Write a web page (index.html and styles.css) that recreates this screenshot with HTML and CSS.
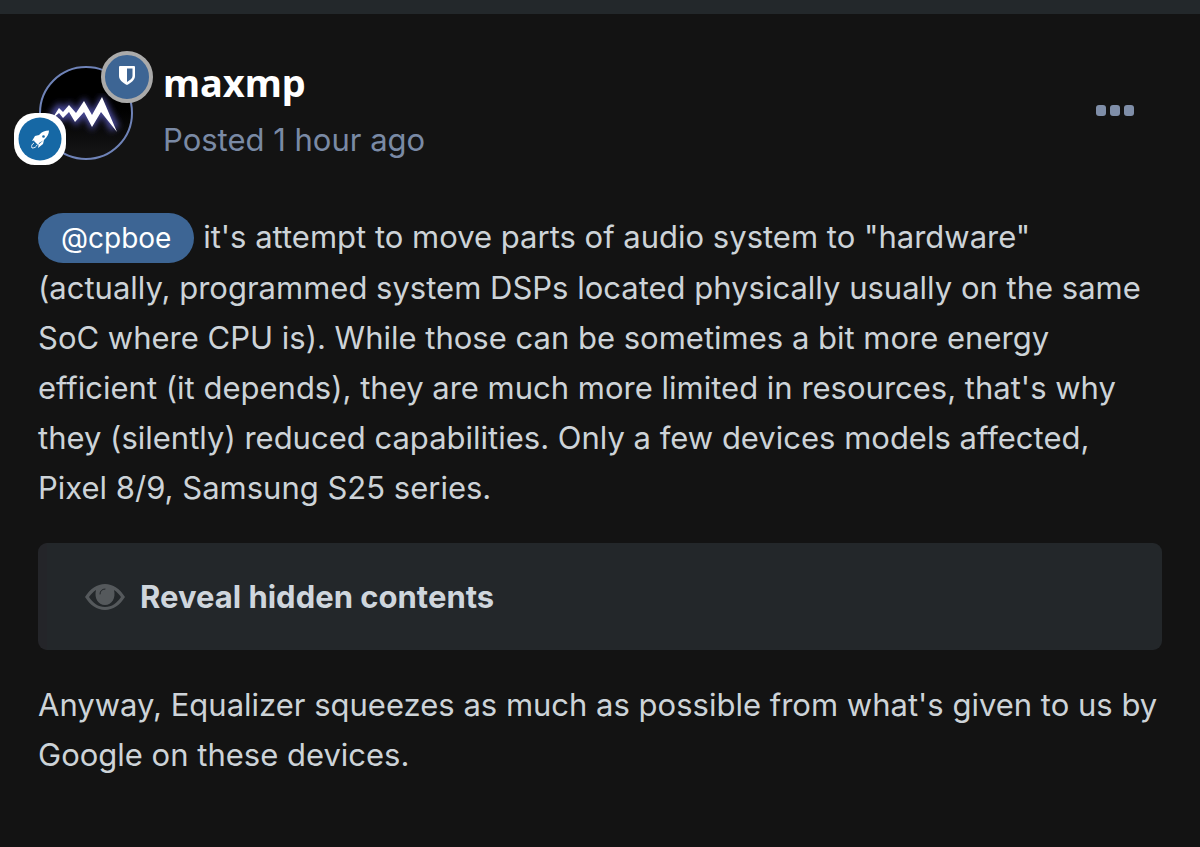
FILE: index.html
```html
<!DOCTYPE html>
<html lang="en">
<head>
<meta charset="utf-8">
<meta name="viewport" content="width=device-width, initial-scale=1">
<title>Forum post</title>
<link rel="stylesheet" href="styles.css">
</head>
<body>
<article class="post">
  <header class="post-header">
    <div class="avatar">
      <svg class="avatar-photo" viewBox="0 0 96 96" role="img" aria-label="maxmp">
        <defs>
          <filter id="glow" x="-30%" y="-50%" width="160%" height="200%"><feGaussianBlur stdDeviation="3"/></filter>
          <linearGradient id="sky" x1="0" y1="0" x2="0" y2="1"><stop offset=".45" stop-color="#000"/><stop offset=".9" stop-color="#131314"/></linearGradient>
          <clipPath id="disc"><circle cx="48" cy="48" r="46"/></clipPath>
        </defs>
        <circle cx="48" cy="48" r="46" fill="url(#sky)"/>
        <g clip-path="url(#disc)">
          <path d="M15 52 21 45 25 50 31 44 38 53 46 42 54 56 64 40 77 64" fill="none" stroke="#4a4a98" stroke-width="10" filter="url(#glow)"/>
          <path d="M14 54 21 43 25 47 31 40 38 48 46 36 54 50 64 32 79 67 63 47 54 62 46 47 37 57 31 47 25 53 21 48Z" fill="#fff"/>
        </g>
        <circle cx="48" cy="48" r="46" fill="none" stroke="#6f83b8" stroke-width="2"/>
      </svg>
      <svg class="badge badge-group" viewBox="0 0 52 52" role="img" aria-label="Moderator">
        <circle cx="26" cy="26" r="24" fill="#3d6594" stroke="#aaa" stroke-width="4"/>
        <path fill="#fff" fill-rule="evenodd" d="M19 15H33Q34 15 34 16V25C34 29 30 32 26 34C22 32 18 29 18 25V16Q18 15 19 15ZM26 17.500V31C29 29 31.500 27.500 31.500 25V17.500Z"/>
      </svg>
      <svg class="badge badge-rank" viewBox="0 0 52 52" role="img" aria-label="Rank">
        <rect width="52" height="52" rx="21" fill="#fff"/>
        <circle cx="26" cy="26" r="21.500" fill="#1668a5"/>
        <path fill="#fff" d="M35 17.500C31 17.500 28 19 26 21L20 28 24 32 31 26C33 24 35 21 35 17.500ZM25 22 21 23 18 28 22 27ZM30 27 29 31 24 35 25 30Z"/>
        <circle cx="29.500" cy="23.500" r="1.300" fill="#1668a5"/>
        <path d="M20 30C18 31 17 33 18 35C21 35 22 34 23 32" fill="none" stroke="#e4edf5"/>
      </svg>
    </div>
    <div class="byline">
      <h2 class="author">maxmp</h2>
      <a class="posted" href="#post">Posted <time>1 hour ago</time></a>
    </div>
    <button class="more" type="button" aria-label="More options">
      <svg class="more-icon" viewBox="0 0 38 11" aria-hidden="true"><rect width="10" height="11" rx="3"/><rect x="14" width="10" height="11" rx="3"/><rect x="28" width="10" height="11" rx="3"/></svg>
    </button>
  </header>
  <div class="content" id="post">
    <p><a class="mention" href="#cpboe">@cpboe</a> it's attempt to move parts of audio system to "hardware" (actually, programmed system DSPs located physically usually on the same SoC where CPU is). While those can be sometimes a bit more energy efficient (it depends), they are much more limited in resources, that's why they (silently) reduced capabilities. Only a few devices models affected, Pixel 8/9, Samsung S25 series.</p>
    <button class="spoiler" type="button">
      <svg class="eye" viewBox="0 0 40 26" aria-hidden="true">
        <path class="eye-fill" fill-rule="evenodd" d="M0 13C5 5 12 0 20 0S35 5 40 13C35 21 28 26 20 26S5 21 0 13ZM4 13C8 19 13 23 20 23S32 19 36 13C34 10 32 8 29 6C31 14 27 21 20 21S9 14 11 6C8 8 6 10 4 13Z"/>
        <path class="eye-glint" d="M15 10C15 7 17 5 20 5"/>
      </svg>
      <span>Reveal hidden contents</span>
    </button>
    <p>Anyway, Equalizer squeezes as much as possible from what's given to us by Google on these devices.</p>
  </div>
</article>
</body>
</html>
```
FILE: styles.css
```css
* { box-sizing: border-box; }
body {
  margin: 0;
  background: #131313;
  color: #cdd3d8;
  font-family: Inter, "Liberation Sans", sans-serif;
}
.post {
  border-top: 14px solid #23282b;
  padding: 37px 38px 66px;
}
.post-header {
  display: flex;
  align-items: flex-start;
  margin-bottom: 51px;
}
.avatar {
  position: relative;
  width: 96px;
  height: 96px;
  margin-top: 14px;
  flex: none;
}
.avatar-photo { display: block; width: 100%; height: 100%; }
.badge { position: absolute; width: 52px; height: 52px; }
.badge-group { top: -14px; right: -19px; }
.badge-rank { bottom: -4px; left: -24px; }
.byline { flex: 1; margin-left: 29px; }
.author {
  margin: 0;
  color: #fff;
  font: 700 38px/62px "Noto Sans", sans-serif;
}
.posted {
  display: block;
  color: #7a8aa5;
  font-size: 31px;
  line-height: 40px;
  text-decoration: none;
  margin-top: 7px;
}
.more {
  align-self: center;
  border: 0;
  background: none;
  padding: 24px 28px 16px;
}
.more-icon { display: block; width: 38px; height: 11px; fill: #7f8ea8; }
.content { font-size: 31px; line-height: 50px; }
.content p { margin: 0; }
.mention {
  display: inline-block;
  padding: 0 23px;
  border-radius: 25px;
  background: #3d6594;
  color: #fff;
  font-size: 28px;
  text-decoration: none;
}
.spoiler {
  display: flex;
  align-items: center;
  gap: 15px;
  width: 100%;
  margin: 30px 0;
  padding: 28px 38px;
  border: 0;
  border-left: 9px solid #242529;
  border-radius: 9px;
  background: #23272a;
  color: #cfd6dd;
  font: 700 31px/51px Inter, "Liberation Sans", sans-serif;
  text-align: left;
}
.eye { width: 40px; height: 26px; }
.eye-fill { fill: #55595c; }
.eye-glint { fill: none; stroke: #23272a; stroke-linecap: round; }
```
